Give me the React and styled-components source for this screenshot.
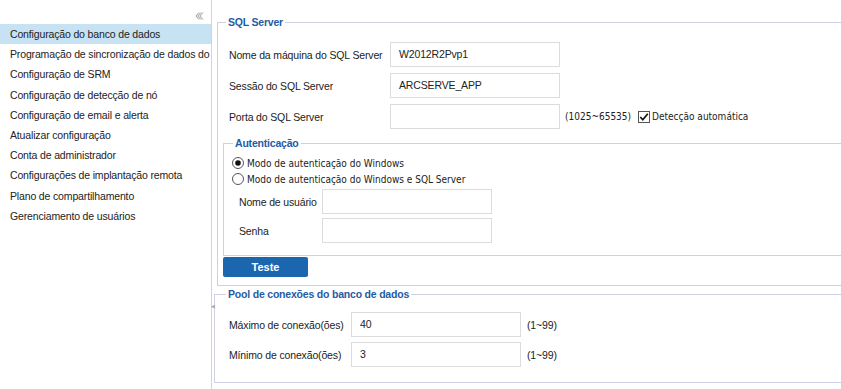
import React from 'react';
import styled, { createGlobalStyle } from 'styled-components';

const GlobalStyle = createGlobalStyle`
  html, body {
    margin: 0;
    padding: 0;
    background: #fff;
    overflow: hidden;
  }
  body {
    font-family: "Liberation Sans", Arial, sans-serif;
    font-size: 10.5px;
    letter-spacing: -0.15px;
    color: #222;
  }
`;

const Page = styled.div`
  display: flex;
  width: 841px;
  height: 389px;
  overflow: hidden;
`;

const Sidebar = styled.div`
  width: 212px;
  flex: none;
  border-right: 1px solid #d4d4d4;
  box-sizing: border-box;
`;

const CollapseBar = styled.div`
  height: 24px;
  display: flex;
  align-items: center;
  justify-content: flex-end;
  padding-right: 7px;
  padding-top: 8px;
  box-sizing: border-box;
`;

const NavItem = styled.div`
  height: 20.2px;
  line-height: 20px;
  padding-left: 10px;
  white-space: nowrap;
  overflow: hidden;
  background: ${p => (p.$active ? '#c7e2f3' : 'transparent')};
`;

const Main = styled.div`
  flex: 1;
  position: relative;
  padding-left: 5px;
`;

const Splitter = styled.div`
  position: absolute;
  left: -1px;
  top: 302px;
  color: #aaa;
  font-size: 5px;
  line-height: 8px;
`;

const Group = styled.fieldset`
  border: 1px solid #cdd1e3;
  border-right: none;
  margin: ${p => p.$margin || '0'};
  padding: ${p => p.$padding || '0'};
  width: ${p => p.$width || '640px'};
  box-sizing: border-box;
`;

const Legend = styled.legend`
  color: #1f5ca3;
  font-weight: bold;
  font-size: 10.5px;
  letter-spacing: -0.2px;
  padding: 0 2px;
  margin-left: ${p => p.$indent || '0'};
  line-height: 14px;
`;

const Row = styled.div`
  display: flex;
  align-items: center;
  height: 25px;
  margin-bottom: ${p => p.$gap || '6px'};
  padding-left: ${p => p.$indent || '0'};
  margin-top: ${p => p.$top || '0'};
`;

const Label = styled.div`
  width: ${p => p.$width};
  flex: none;
  white-space: nowrap;
`;

const TextBox = styled.div`
  width: 170px;
  height: 25px;
  box-sizing: border-box;
  border: 1px solid #dcdcdc;
  padding-left: 8px;
  line-height: 23px;
  flex: none;
`;

const Hint = styled.span`
  margin-left: ${p => (p.$alt ? '5px' : '6px')};
  font-family: ${p => (p.$alt ? '"DejaVu Sans Condensed", "DejaVu Sans", sans-serif' : 'inherit')};
  font-size: ${p => (p.$alt ? '10px' : '10.5px')};
  letter-spacing: ${p => (p.$alt ? '0' : '-0.15px')};
  white-space: nowrap;
`;

const Check = styled.span`
  display: inline-flex;
  align-items: center;
  margin-left: 7px;
  font-family: "DejaVu Sans Condensed", "DejaVu Sans", sans-serif;
  font-size: 10px;
  letter-spacing: 0;
  white-space: nowrap;
  gap: 2px;
`;

const Radio = styled.div`
  display: flex;
  align-items: center;
  height: 16px;
  gap: 3px;
  font-family: "DejaVu Sans Condensed", "DejaVu Sans", sans-serif;
  font-size: 10px;
  letter-spacing: 0;
  white-space: nowrap;
`;

const ButtonRow = styled.div`
  display: flex;
  margin: 1px 0 0 -6px;
`;

const Button = styled.div`
  width: 85px;
  height: 20px;
  background: #1c66b0;
  border-radius: 2px;
  color: #fff;
  font-weight: bold;
  font-size: 11px;
  letter-spacing: 0;
  text-align: center;
  line-height: 21px;
`;

const CollapseIcon = () => (
  <svg width="9" height="8" viewBox="0 0 9 8">
    <path d="M4 0.5 L0.8 4 L4 7.5 M8 0.5 L4.8 4 L8 7.5 M6 0.5 L2.8 4 L6 7.5" fill="none" stroke="#999" strokeWidth="1" />
  </svg>
);

const CheckBox = () => (
  <svg width="12" height="12" viewBox="0 0 12 12">
    <rect x="0.5" y="0.5" width="11" height="11" fill="#fff" stroke="#555" />
    <path d="M2.3 6 L4.8 8.8 L9.8 2.8" fill="none" stroke="#111" strokeWidth="1.7" />
  </svg>
);

const RadioDot = ({ checked }) => (
  <svg width="12" height="12" viewBox="0 0 12 12">
    <circle cx="6" cy="6" r="5.5" fill="#fff" stroke="#555" />
    {checked && <circle cx="6" cy="6" r="2.8" fill="#111" />}
  </svg>
);

const navItems = [
  'Configuração do banco de dados',
  'Programação de sincronização de dados do',
  'Configuração de SRM',
  'Configuração de detecção de nó',
  'Configuração de email e alerta',
  'Atualizar configuração',
  'Conta de administrador',
  'Configurações de implantação remota',
  'Plano de compartilhamento',
  'Gerenciamento de usuários',
];

export default function App() {
  return (
    <Page>
      <GlobalStyle />
      <Sidebar>
        <CollapseBar>
          <CollapseIcon />
        </CollapseBar>
        {navItems.map((t, i) => (
          <NavItem key={t} $active={i === 0}>{t}</NavItem>
        ))}
      </Sidebar>
      <Main>
        <Splitter>◀</Splitter>
        <Group $margin="15px 0 0 0" $padding="13px 0 8px 11px">
          <Legend $indent="-3px">SQL Server</Legend>
          <Row>
            <Label $width="161px">Nome da máquina do SQL Server</Label>
            <TextBox>W2012R2Pvp1</TextBox>
          </Row>
          <Row>
            <Label $width="161px">Sessão do SQL Server</Label>
            <TextBox>ARCSERVE_APP</TextBox>
          </Row>
          <Row $gap="7px">
            <Label $width="161px">Porta do SQL Server</Label>
            <TextBox />
            <Hint $alt>(1025~65535)</Hint>
            <Check>
              <CheckBox />
              Detecção automática
            </Check>
          </Row>
          <Group $margin="0 0 0 -6px" $padding="5px 0 12px 8px" $width="629px">
            <Legend $indent="1px">Autenticação</Legend>
            <Radio>
              <RadioDot checked />
              Modo de autenticação do Windows
            </Radio>
            <Radio>
              <RadioDot />
              Modo de autenticação do Windows e SQL Server
            </Radio>
            <Row $indent="7px" $gap="4px" $top="2px">
              <Label $width="83px">Nome de usuário</Label>
              <TextBox />
            </Row>
            <Row $indent="7px" $gap="0">
              <Label $width="83px">Senha</Label>
              <TextBox />
            </Row>
          </Group>
          <ButtonRow>
            <Button>Teste</Button>
          </ButtonRow>
        </Group>
        <Group $margin="1px 0 0 -3px" $padding="11px 0 15px 14px">
          <Legend $indent="-3px">Pool de conexões do banco de dados</Legend>
          <Row $gap="5px">
            <Label $width="122px">Máximo de conexão(ões)</Label>
            <TextBox>40</TextBox>
            <Hint>(1~99)</Hint>
          </Row>
          <Row $gap="0">
            <Label $width="122px">Mínimo de conexão(ões)</Label>
            <TextBox>3</TextBox>
            <Hint>(1~99)</Hint>
          </Row>
        </Group>
      </Main>
    </Page>
  );
}
